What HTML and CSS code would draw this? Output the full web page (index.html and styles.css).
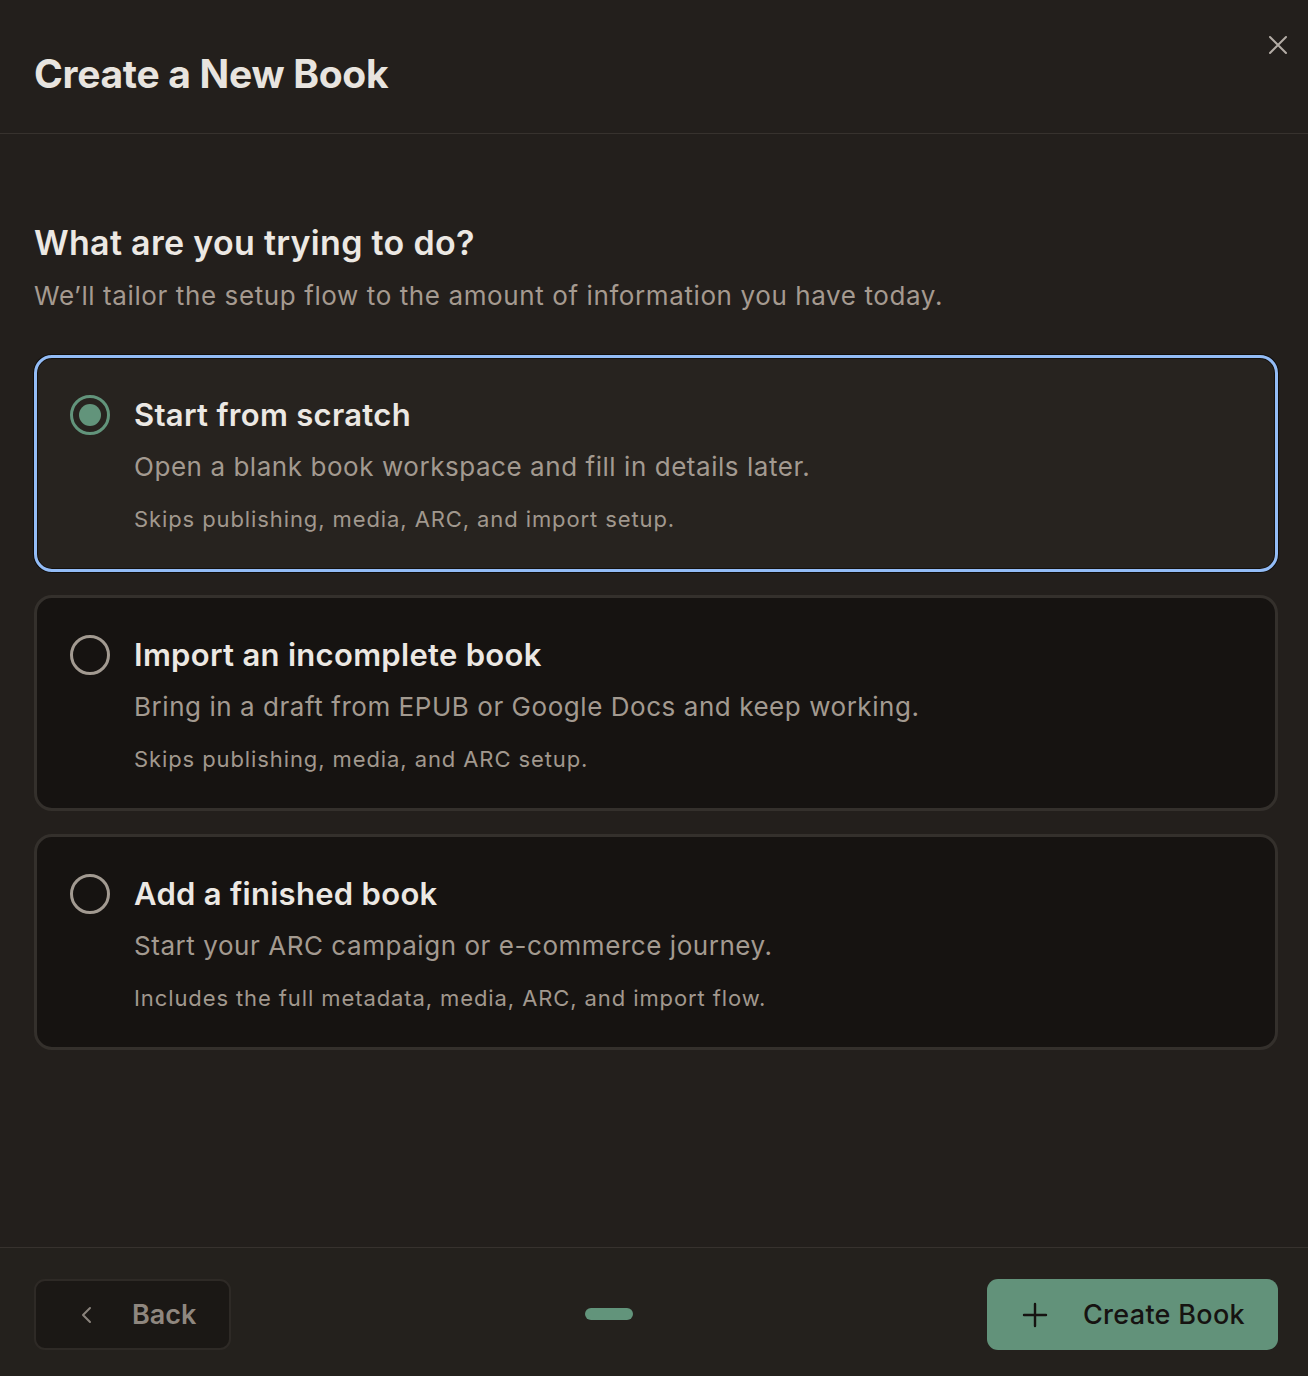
FILE: index.html
```html
<!DOCTYPE html>
<html lang="en">

<head>
    <meta charset="UTF-8">
    <meta name="viewport" content="width=device-width, initial-scale=1.0">
    <title>Create a New Book</title>
    <link rel="stylesheet" href="styles.css">
</head>

<body>
    <div class="modal">
        <header class="modal-head">
            <h1>Create a New Book</h1>
            <button class="close" aria-label="Close">
                <svg width="22" height="22" viewBox="0 0 22 22">
                    <path d="M3 3 L19 19 M19 3 L3 19" stroke="#b3aca5" stroke-width="2" stroke-linecap="round" />
                </svg>
            </button>
        </header>

        <main class="modal-body">
            <h2>What are you trying to do?</h2>
            <p class="lead">We’ll tailor the setup flow to the amount of information you have today.</p>

            <div class="choices">
                <label class="choice selected">
                    <span class="radio"><span class="dot"></span></span>
                    <div class="choice-text">
                        <div class="choice-title">Start from scratch</div>
                        <div class="choice-desc">Open a blank book workspace and fill in details later.</div>
                        <div class="choice-note">Skips publishing, media, ARC, and import setup.</div>
                    </div>
                </label>

                <label class="choice">
                    <span class="radio"></span>
                    <div class="choice-text">
                        <div class="choice-title">Import an incomplete book</div>
                        <div class="choice-desc">Bring in a draft from EPUB or Google Docs and keep working.</div>
                        <div class="choice-note">Skips publishing, media, and ARC setup.</div>
                    </div>
                </label>

                <label class="choice">
                    <span class="radio"></span>
                    <div class="choice-text">
                        <div class="choice-title">Add a finished book</div>
                        <div class="choice-desc">Start your ARC campaign or e-commerce journey.</div>
                        <div class="choice-note">Includes the full metadata, media, ARC, and import flow.</div>
                    </div>
                </label>
            </div>
        </main>

        <footer class="modal-foot">
            <button class="btn back">
                <svg width="20" height="20" viewBox="0 0 20 20">
                    <path d="M13 3 L6 10 L13 17" fill="none" stroke="#8a837c" stroke-width="2" stroke-linecap="round" stroke-linejoin="round" />
                </svg>
                <span>Back</span>
            </button>

            <div class="steps"><span class="step"></span></div>

            <button class="btn create">
                <svg width="26" height="26" viewBox="0 0 26 26">
                    <path d="M13 2 V24 M2 13 H24" stroke="#161311" stroke-width="2.4" stroke-linecap="round" />
                </svg>
                <span>Create Book</span>
            </button>
        </footer>
    </div>
</body>

</html>
```

FILE: styles.css
```css
body {
    margin: 0;
    background-color: #231f1c;
    font-family: 'Inter', 'Noto Sans', sans-serif;
}

.modal {
    width: 1308px;
    height: 1376px;
    display: flex;
    flex-direction: column;
    background-color: #231f1c;
}

/* header */

.modal-head {
    position: relative;
    height: 133px;
    border-bottom: 1px solid #37322e;
    display: flex;
    align-items: center;
    padding: 0 34px;
    box-sizing: content-box;
}

h1 {
    margin: 0;
    margin-top: 13px;
    font-size: 39px;
    font-weight: 700;
    letter-spacing: -0.3px;
    color: #e8e4df;
}

.close {
    position: absolute;
    top: 34px;
    right: 19px;
    background: none;
    border: none;
    padding: 0;
    cursor: pointer;
}

/* body */

.modal-body {
    flex: 1;
    padding: 87px 30px 0 34px;
}

h2 {
    margin: 0;
    font-size: 34px;
    line-height: 44px;
    font-weight: 600;
    letter-spacing: 0.3px;
    color: #ece8e3;
}

.lead {
    margin: 13px 0 0 0;
    font-size: 26px;
    line-height: 36px;
    letter-spacing: 0.6px;
    color: #a59a90;
}

.choices {
    margin-top: 41px;
    display: flex;
    flex-direction: column;
    gap: 23px;
}

.choice {
    display: flex;
    gap: 24px;
    padding: 37px 33px 34px 33px;
    border: 3px solid #34302c;
    border-radius: 18px;
    background-color: #161311;
    cursor: pointer;
}

.choice.selected {
    padding-bottom: 35px;
    background-color: #27231f;
    border-color: #93bcf6;
    box-shadow: 0 0 0 1px #100e0c, inset 0 0 0 1px #15120f;
}

.radio {
    flex: none;
    width: 40px;
    height: 40px;
    box-sizing: border-box;
    border: 3px solid #a29a91;
    border-radius: 50%;
    display: flex;
    align-items: center;
    justify-content: center;
}

.selected .radio {
    border-color: #62947b;
}

.dot {
    width: 22px;
    height: 22px;
    border-radius: 50%;
    background-color: #62947b;
}

.choice-title {
    font-size: 31px;
    line-height: 40px;
    font-weight: 600;
    letter-spacing: 0.3px;
    color: #ece8e3;
}

.choice-desc {
    margin-top: 14px;
    font-size: 26px;
    line-height: 36px;
    letter-spacing: 0.55px;
    color: #a39a90;
}

.choice-note {
    margin-top: 19px;
    font-size: 22px;
    line-height: 30px;
    letter-spacing: 0.9px;
    color: #a1988e;
}

/* footer */

.modal-foot {
    height: 129px;
    border-top: 1px solid #37322e;
    background-color: #24211d;
    display: flex;
    justify-content: space-between;
    align-items: flex-start;
    padding: 31px 30px 0 34px;
    box-sizing: border-box;
}

.btn {
    height: 71px;
    border-radius: 11px;
    display: flex;
    align-items: center;
    font-family: 'Inter', 'Noto Sans', sans-serif;
    font-size: 27px;
    cursor: pointer;
}

.back {
    width: 197px;
    padding: 0 0 0 41px;
    gap: 35px;
    background-color: #1b1815;
    border: 2px solid #2e2a26;
    color: #8f877f;
    font-weight: 600;
}

.steps {
    margin-top: 29px;
}

.step {
    display: block;
    width: 48px;
    height: 12px;
    border-radius: 6px;
    background-color: #62947b;
}

.create {
    width: 291px;
    padding: 0 0 0 35px;
    gap: 35px;
    background-color: #62927a;
    border: none;
    color: #161311;
    font-weight: 500;
    letter-spacing: 0.3px;
}
```
